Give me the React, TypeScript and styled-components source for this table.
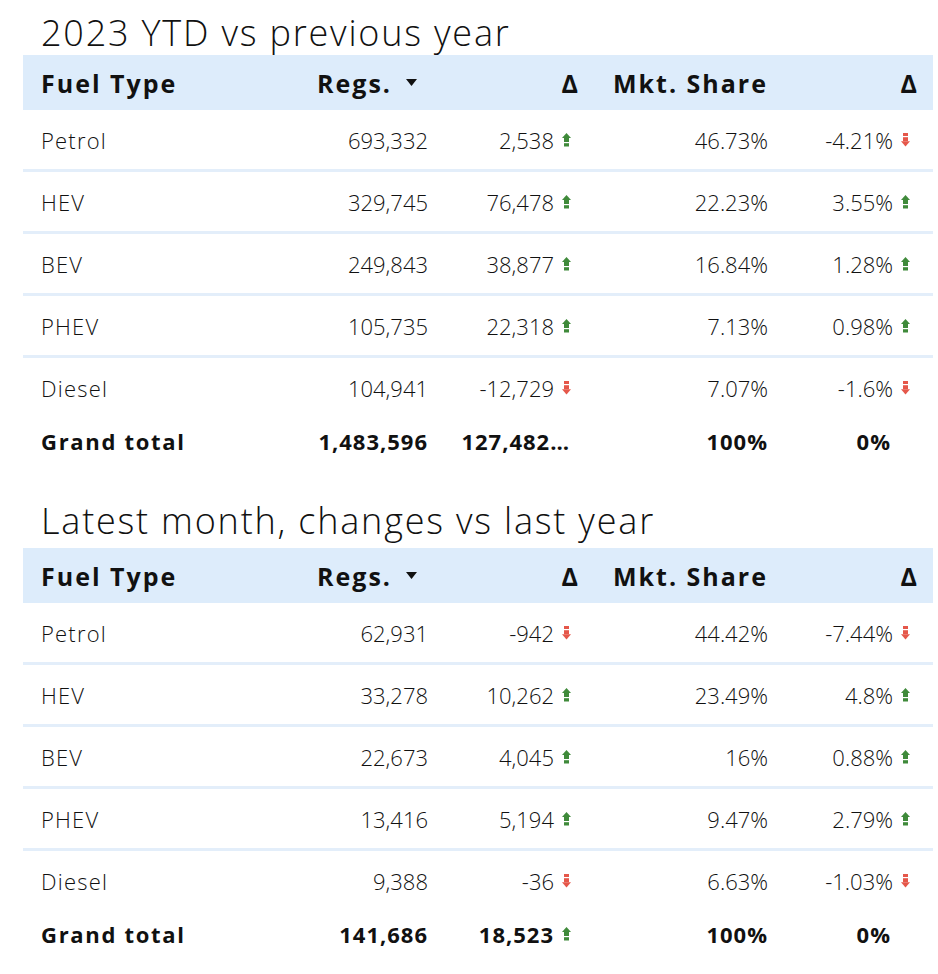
import React from "react";
import styled, { createGlobalStyle } from "styled-components";

const GlobalStyle = createGlobalStyle`
  body {
    margin: 0;
    background: #ffffff;
    font-family: "Open Sans", "Lato", sans-serif;
    color: #111;
  }
`;

const Page = styled.div`
  width: 938px;
  padding: 2px 5px 0 23px;
  box-sizing: border-box;
`;

const Title = styled.h2<{ $top: number; $bottom: number }>`
  margin: ${(p) => p.$top}px 0 ${(p) => p.$bottom}px 18px;
  font-size: 36px;
  font-weight: 300;
  line-height: 40px;
  letter-spacing: 1.8px;
  color: #111;
`;

const COLS = "247px 172px 152px 188px 151px";

const Table = styled.div`
  width: 910px;
`;

const HeadRow = styled.div`
  display: grid;
  grid-template-columns: ${COLS};
  height: 55px;
  align-items: center;
  background: #ddecfb;
  font-size: 25px;
  font-weight: 700;
  letter-spacing: 2px;
`;

const Row = styled.div<{ $line?: boolean; $total?: boolean }>`
  display: grid;
  grid-template-columns: ${COLS};
  height: ${(p) => (p.$total ? 47 : 59)}px;
  align-items: center;
  border-bottom: ${(p) => (p.$line ? "3px solid #e3eefa" : "none")};
  font-size: 22px;
  font-weight: ${(p) => (p.$total ? 700 : 300)};
  letter-spacing: ${(p) => (p.$total ? 1 : 0)}px;
`;

const Cell = styled.div<{ $left?: boolean; $pad?: number }>`
  display: flex;
  align-items: center;
  justify-content: ${(p) => (p.$left ? "flex-start" : "flex-end")};
  padding: ${(p) => (p.$left ? "0 0 0 18px" : `0 ${p.$pad ?? 14}px 0 0`)};
  white-space: nowrap;
`;

const Label = styled.span<{ $total?: boolean }>`
  letter-spacing: ${(p) => (p.$total ? 1.7 : 1.2)}px;
`;

const SortMark = styled.svg`
  margin: 0 11px 0 14px;
`;

const ArrowBox = styled.span`
  display: inline-flex;
  width: 9px;
  margin: 0 9px 0 8px;
`;

type Dir = "up" | "down" | "none";

const Arrow = ({ dir }: { dir: Dir }) => {
  if (dir === "up") {
    return (
      <ArrowBox>
        <svg width="9" height="16" viewBox="0 0 9 16">
          <polygon points="0,6 4.5,1 9,6" fill="#3f8a3a" />
          <rect x="2" y="6" width="5" height="4" fill="#3f8a3a" />
          <rect x="2" y="11.2" width="5" height="3.3" fill="#3f8a3a" />
        </svg>
      </ArrowBox>
    );
  }
  if (dir === "down") {
    return (
      <ArrowBox>
        <svg width="9" height="16" viewBox="0 0 9 16">
          <rect x="2" y="1" width="5" height="3" fill="#e5574a" />
          <rect x="2" y="5.2" width="5" height="4" fill="#e5574a" />
          <polygon points="0,9.2 9,9.2 4.5,14.5" fill="#e5574a" />
        </svg>
      </ArrowBox>
    );
  }
  return null;
};

type Line = {
  fuel: string;
  regs: string;
  delta: string;
  dDir: Dir;
  share: string;
  sDelta: string;
  sDir: Dir;
};

const ytd: Line[] = [
  { fuel: "Petrol", regs: "693,332", delta: "2,538", dDir: "up", share: "46.73%", sDelta: "-4.21%", sDir: "down" },
  { fuel: "HEV", regs: "329,745", delta: "76,478", dDir: "up", share: "22.23%", sDelta: "3.55%", sDir: "up" },
  { fuel: "BEV", regs: "249,843", delta: "38,877", dDir: "up", share: "16.84%", sDelta: "1.28%", sDir: "up" },
  { fuel: "PHEV", regs: "105,735", delta: "22,318", dDir: "up", share: "7.13%", sDelta: "0.98%", sDir: "up" },
  { fuel: "Diesel", regs: "104,941", delta: "-12,729", dDir: "down", share: "7.07%", sDelta: "-1.6%", sDir: "down" },
];

const ytdTotal: Line = { fuel: "Grand total", regs: "1,483,596", delta: "127,482…", dDir: "none", share: "100%", sDelta: "0%", sDir: "none" };

const month: Line[] = [
  { fuel: "Petrol", regs: "62,931", delta: "-942", dDir: "down", share: "44.42%", sDelta: "-7.44%", sDir: "down" },
  { fuel: "HEV", regs: "33,278", delta: "10,262", dDir: "up", share: "23.49%", sDelta: "4.8%", sDir: "up" },
  { fuel: "BEV", regs: "22,673", delta: "4,045", dDir: "up", share: "16%", sDelta: "0.88%", sDir: "up" },
  { fuel: "PHEV", regs: "13,416", delta: "5,194", dDir: "up", share: "9.47%", sDelta: "2.79%", sDir: "up" },
  { fuel: "Diesel", regs: "9,388", delta: "-36", dDir: "down", share: "6.63%", sDelta: "-1.03%", sDir: "down" },
];

const monthTotal: Line = { fuel: "Grand total", regs: "141,686", delta: "18,523", dDir: "up", share: "100%", sDelta: "0%", sDir: "none" };

const DataRow = ({ r, line, total }: { r: Line; line?: boolean; total?: boolean }) => (
  <Row $line={line} $total={total}>
    <Cell $left>
      <Label $total={total}>{r.fuel}</Label>
    </Cell>
    <Cell>{r.regs}</Cell>
    <Cell $pad={r.dDir === "none" ? 24 : 14}>
      {r.delta}
      <Arrow dir={r.dDir} />
    </Cell>
    <Cell>{r.share}</Cell>
    <Cell $pad={r.sDir === "none" ? 42 : 14}>
      {r.sDelta}
      <Arrow dir={r.sDir} />
    </Cell>
  </Row>
);

const FuelTable = ({ rows, total }: { rows: Line[]; total: Line }) => (
  <Table>
    <HeadRow>
      <Cell $left>Fuel Type</Cell>
      <Cell>
        Regs.
        <SortMark width="11" height="7" viewBox="0 0 11 7">
          <polygon points="0,0 11,0 5.5,7" fill="#111" />
        </SortMark>
      </Cell>
      <Cell>Δ</Cell>
      <Cell>Mkt. Share</Cell>
      <Cell>Δ</Cell>
    </HeadRow>
    {rows.map((r, i) => (
      <DataRow key={r.fuel} r={r} line={i < rows.length - 1} />
    ))}
    <DataRow r={total} total />
  </Table>
);

export default function App() {
  return (
    <Page>
      <GlobalStyle />
      <Title $top={11} $bottom={2}>2023 YTD vs previous year</Title>
      <FuelTable rows={ytd} total={ytdTotal} />
      <Title $top={37} $bottom={7}>Latest month, changes vs last year</Title>
      <FuelTable rows={month} total={monthTotal} />
    </Page>
  );
}
